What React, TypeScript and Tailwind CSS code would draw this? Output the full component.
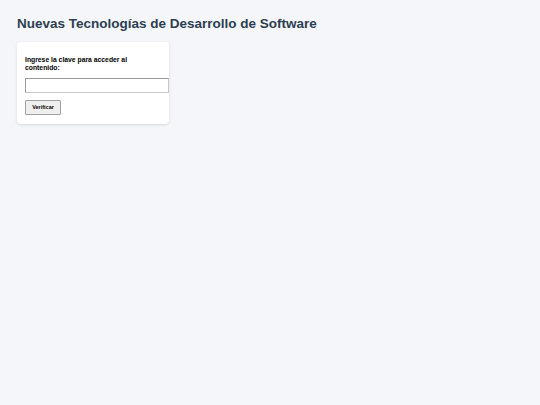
import React from 'react';

const App: React.FC = () => {
  return (
    <div
      className="min-h-screen w-full bg-[#f5f6fa] px-[17px] pt-[16px]"
      style={{ fontFamily: '"Liberation Sans", Arial, sans-serif' }}
    >
      {/* Title */}
      <h1 className="text-[13.5px] leading-[16px] font-bold text-[#2c3e50]">
        Nuevas Tecnologías de Desarrollo de Software
      </h1>

      {/* Card */}
      <div className="mt-[10px] w-[152px] h-[82px] bg-white rounded-[4px] shadow-[0_1px_3px_rgba(0,0,0,0.12)] px-[8px] pt-[14px]">
        <label className="block text-[6.8px] leading-[8px] font-bold text-black">
          Ingrese la clave para acceder al contenido:
        </label>
        <input
          type="password"
          className="block mt-[6px] w-[144px] h-[15px] bg-white border border-[#c8c8c8] border-t-[#9a9a9a] border-l-[#9a9a9a]"
        />
        <button className="mt-[7px] w-[36px] h-[15px] bg-[#efefef] border border-[#a0a0a0] rounded-[1px] text-[5.5px] font-bold text-black flex items-center justify-center">
          Verificar
        </button>
      </div>
    </div>
  );
};

export default App;
